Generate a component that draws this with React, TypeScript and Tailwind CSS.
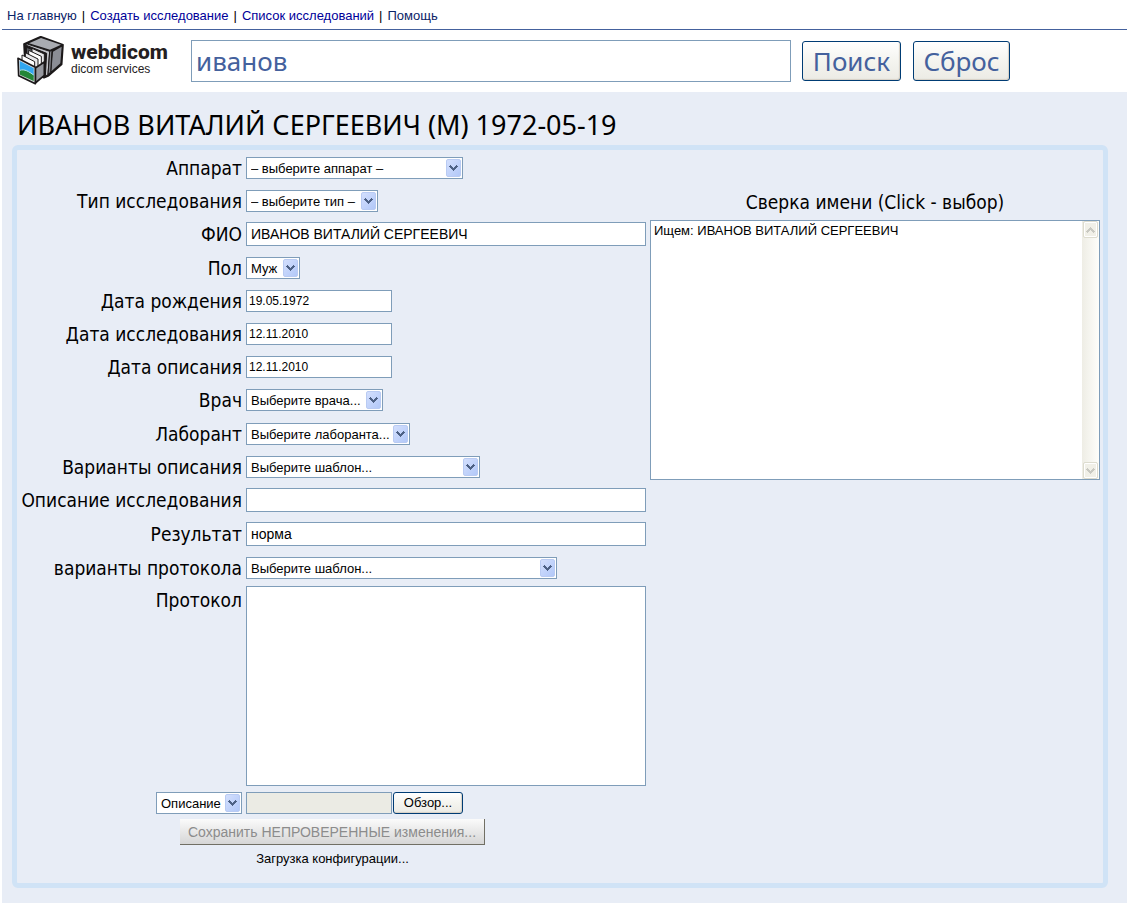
import type { ReactNode } from "react";

const plain = "font-['Liberation_Sans',sans-serif] leading-4 text-black";
const small = `${plain} text-[13px]`;
const box = "border border-[#7f9db9] bg-white outline-none";
const caption = "font-['DejaVu_Sans_Condensed','Noto_Sans',sans-serif] text-[19px] leading-6 whitespace-nowrap";

function Logo() {
  return (
    <svg viewBox="9 12 144 150" className="h-[50px] w-12 shrink-0" aria-hidden="true" strokeLinejoin="round" stroke="#1b1819">
      <path d="M30 36 80 14 147 38 143 97 104 131 90 137 34 112Z" fill="#1b1819" strokeWidth="5" />
      <path d="M45 34 81 18 141 38 108 53Z" fill="#a9abb1" stroke="none" />
      <path d="M117 59 143 44 139 94 112 118Z" fill="#8b8d95" stroke="none" />
      <path d="M32 38 40 36 107 58 102 128 94 132 98 64Z" fill="#c3c4c9" strokeWidth="3" />
      <path d="M107 58 114 55 110 121 102 127Z" fill="#808289" strokeWidth="3" />
      <path d="M37 46 94 67 90 126 39 105Z" fill="#55565c" strokeWidth="3" />
      <path d="M54 92V49L91 66V110Z" fill="#e8e8ea" strokeWidth="3" />
      <path d="M44 94V55L82 73V112Z" fill="#fff" strokeWidth="3" />
      <path d="M34 98V62L72 81V112Z" fill="#e8e8ea" strokeWidth="3" />
      <path d="M24 96V69L62 89V110Z" fill="#fff" strokeWidth="3" />
      <path d="M64 108 91 90V130L64 153Z" fill="#96989f" strokeWidth="5" />
      <path d="M12 79 64 106 64 155 14 131Z" fill="#d9dadd" strokeWidth="5" />
      <path d="M17 87 59 109V135L18 116Z" fill="#31a6ef" stroke="none" />
      <path d="M18 115C31 110 45 119 59 129V147L18 128Z" fill="#238638" stroke="none" />
      <path d="M18 115C31 110 45 119 59 129" fill="none" stroke="#b5e4f5" strokeWidth="3" />
    </svg>
  );
}

function Chevron({ up = false }: { up?: boolean }) {
  return (
    <svg viewBox="0 0 9 6" className="h-1.5 w-[9px]" fill="currentColor" shapeRendering="crispEdges" aria-hidden="true">
      {up ? (
        <path d="M4 0h1v1h1v1h1v1h1v1h1v1H8v1H7V5H6V4H5V3H4v1H3v1H2v1H1V5H0V4h1V3h1V2h1V1h1Z" />
      ) : (
        <path d="M1 0h1v1h1v1h1v1h1V2h1V1h1V0h1v1h1v1H8v1H7v1H6v1H5v1H4V5H3V4H2V3H1V2H0V1h1Z" />
      )}
    </svg>
  );
}

function Select({ id, value, width, label }: { id: string; value: string; width: string; label?: string }) {
  return (
    <div className={`relative h-[22px] shrink-0 ${width}`}>
      <select id={id} aria-label={label} className={`${small} ${box} block h-full w-full appearance-none px-1 pt-0.5`}>
        <option>{value}</option>
      </select>
      <span className="pointer-events-none absolute inset-y-0.5 right-0.5 flex w-[15px] items-center justify-center rounded-[2px] border border-[#b9cbf3] bg-linear-to-br from-[#d3dffd] to-[#b2c8f8] text-[#4d6185]">
        <Chevron />
      </span>
    </div>
  );
}

function Row({ label, id, tall = false, children }: { label: string; id: string; tall?: boolean; children: ReactNode }) {
  return (
    <div className={`flex items-center gap-1 ${tall ? "h-[34px]" : "h-[33px]"}`}>
      <label htmlFor={id} className={`${caption} flex w-[223px] shrink-0 justify-end`}>
        {label}
      </label>
      {children}
    </div>
  );
}

function TextField({ id, value }: { id: string; value?: string }) {
  return <input id={id} defaultValue={value} className={`${plain} ${box} h-6 w-[400px] px-1 text-sm`} />;
}

function DateField({ id, value }: { id: string; value: string }) {
  return <input id={id} defaultValue={value} className={`${plain} ${box} h-[22px] w-[146px] px-0.5 text-xs`} />;
}

const xpButton =
  "rounded-[3px] border border-[#003c74] bg-linear-to-b from-white via-[#f4f4ef] to-[#ecebe5] shadow-[inset_-1px_-1px_1px_#d6d0c5]";

const scrollButton =
  "flex h-[17px] items-center justify-center rounded-[2px] border border-[#dddccf] bg-[#f1f0e8] shadow-[inset_0_0_0_1px_white]";

export default function App() {
  return (
    <div className="min-h-screen bg-white pl-0.5 font-['Noto_Sans',sans-serif] text-black">
      <nav className={`${small} flex h-[30px] items-center gap-[5px] border-b border-[#44619d] px-[5px] pt-0.5 whitespace-nowrap`}>
        <a href="#home" className="text-[#0b2467]">На главную</a>
        <span>|</span>
        <a href="#create" className="text-[#000099]">Создать исследование</a>
        <span>|</span>
        <a href="#list" className="text-[#000099]">Список исследований</a>
        <span>|</span>
        <a href="#help" className="text-[#0b2467]">Помощь</a>
      </nav>

      <header className="flex h-[62px] items-center pl-[15px]">
        <a href="#home" className="flex w-[174px] shrink-0 items-center gap-1.5 text-[#242021]">
          <Logo />
          <span className="flex flex-col pb-1.5 whitespace-nowrap">
            <span className="font-[Roboto,sans-serif] text-[21px] leading-[22px] font-extrabold">webdicom</span>
            <span className="font-['Liberation_Sans',sans-serif] text-xs leading-3">dicom services</span>
          </span>
        </a>
        <form className="flex items-center" onSubmit={(e) => e.preventDefault()}>
          <input
            aria-label="Поиск"
            defaultValue="иванов"
            className="h-[42px] w-[600px] border border-[#7f9db9] bg-white px-1 text-[26px] text-[#44619d] outline-none"
          />
          <button type="submit" className={`${xpButton} ml-[11px] h-10 w-[99px] text-[26px] leading-9 text-[#44619d]`}>Поиск</button>
          <button type="reset" className={`${xpButton} ml-3 h-10 w-[97px] text-[26px] leading-9 text-[#44619d]`}>Сброс</button>
        </form>
      </header>

      <main className="min-h-[811px] bg-[#e8edf6] px-2.5 pb-4">
        <h1 className="flex h-[53px] items-end px-[5px] pb-0.5 text-[27px] leading-9 whitespace-nowrap">
          ИВАНОВ ВИТАЛИЙ СЕРГЕЕВИЧ (М) 1972-05-19
        </h1>
        <form
          className="mr-[9px] flex gap-1 rounded-md border-5 border-[#d0e3f6] pt-px pr-[3px] pb-4 pl-0.5"
          onSubmit={(e) => e.preventDefault()}
        >
          <div className="w-[627px] shrink-0">
            <Row label="Аппарат" id="device"><Select id="device" value="– выберите аппарат –" width="w-[217px]" /></Row>
            <Row label="Тип исследования" id="type"><Select id="type" value="– выберите тип –" width="w-[132px]" /></Row>
            <Row label="ФИО" id="name" tall><TextField id="name" value="ИВАНОВ ВИТАЛИЙ СЕРГЕЕВИЧ" /></Row>
            <Row label="Пол" id="sex"><Select id="sex" value="Муж" width="w-[54px]" /></Row>
            <Row label="Дата рождения" id="birth"><DateField id="birth" value="19.05.1972" /></Row>
            <Row label="Дата исследования" id="study"><DateField id="study" value="12.11.2010" /></Row>
            <Row label="Дата описания" id="report"><DateField id="report" value="12.11.2010" /></Row>
            <Row label="Врач" id="doctor" tall><Select id="doctor" value="Выберите врача..." width="w-[137px]" /></Row>
            <Row label="Лаборант" id="assistant"><Select id="assistant" value="Выберите лаборанта..." width="w-[164px]" /></Row>
            <Row label="Варианты описания" id="variants"><Select id="variants" value="Выберите шаблон..." width="w-[234px]" /></Row>
            <Row label="Описание исследования" id="description" tall><TextField id="description" /></Row>
            <Row label="Результат" id="result" tall><TextField id="result" value="норма" /></Row>
            <Row label="варианты протокола" id="templates"><Select id="templates" value="Выберите шаблон..." width="w-[311px]" /></Row>
            <div className="flex gap-1 pt-0.5">
              <label htmlFor="protocol" className={`${caption} flex w-[223px] shrink-0 justify-end pt-0.5`}>Протокол</label>
              <textarea id="protocol" className={`${small} ${box} block h-[200px] w-[400px] resize-none px-1`} />
            </div>
            <div className="flex items-center gap-1 pt-1.5">
              <div className="flex w-[223px] shrink-0 justify-end">
                <Select id="kind" value="Описание" width="w-[86px]" label="Тип файла" />
              </div>
              <div className="flex items-center gap-px">
                <input aria-label="Файл" readOnly className={`${small} h-[22px] w-[146px] border border-[#7f9db9] bg-[#ebebe4] px-1`} />
                <button type="button" className={`${xpButton} ${plain} h-[22px] w-[70px] text-[13px]`}>Обзор...</button>
              </div>
            </div>
            <div className="flex flex-col items-center gap-1.5 pt-[5px]">
              <button
                type="submit"
                disabled
                className="h-[26px] border-r border-b border-[#716f64] bg-linear-to-b from-[#fbfbfb] to-[#d6d6d6] px-2 font-['Liberation_Sans',sans-serif] text-sm leading-4 whitespace-nowrap text-[#8c8c8c]"
              >
                Сохранить НЕПРОВЕРЕННЫЕ изменения...
              </button>
              <p className={small}>Загрузка конфигурации...</p>
            </div>
          </div>

          <section className="min-w-0 flex-1 pt-[33px]">
            <h2 className={`${caption} flex h-9 items-center justify-center`}>Сверка имени (Click - выбор)</h2>
            <div className="flex h-[260px] border border-[#7f9db9] bg-white">
              <div className={`${small} min-w-0 flex-1 px-[3px] py-0.5`}>Ищем: ИВАНОВ ВИТАЛИЙ СЕРГЕЕВИЧ</div>
              <div className="flex w-[17px] shrink-0 flex-col justify-between bg-linear-to-r from-[#eeede5] to-[#fefefb] px-px text-[#c9c9c2]">
                <span className={scrollButton}><Chevron up /></span>
                <span className={scrollButton}><Chevron /></span>
              </div>
            </div>
          </section>
        </form>
      </main>
    </div>
  );
}
